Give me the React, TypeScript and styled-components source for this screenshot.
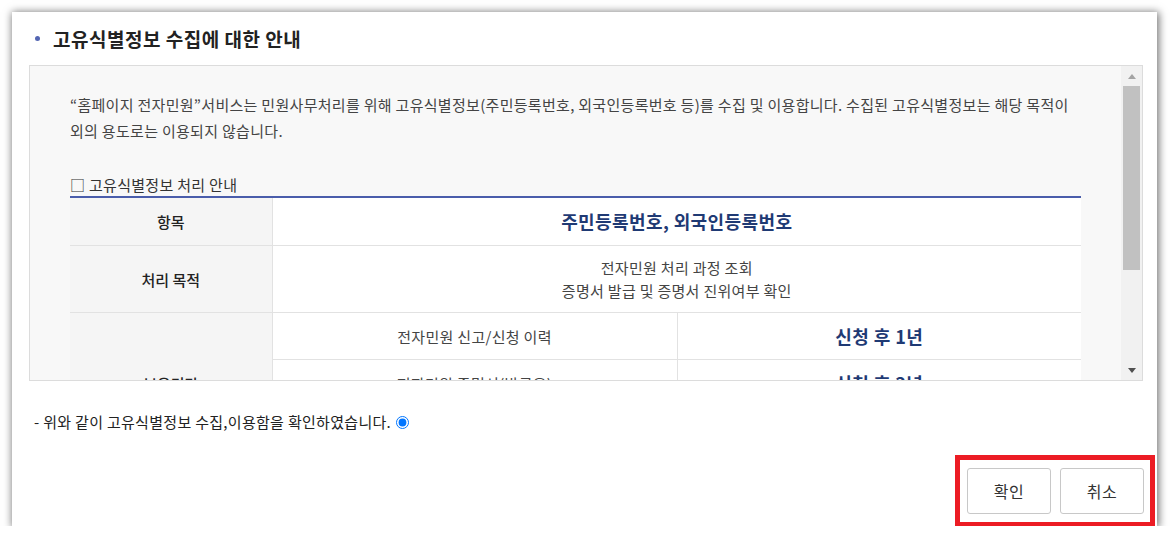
import React from 'react'
import styled, { createGlobalStyle } from 'styled-components'

const GlobalStyle = createGlobalStyle`
	html, body {
		margin: 0;
		padding: 0;
		background: #ffffff;
	}
	body {
		font-family: "Noto Sans CJK KR", "Noto Sans", sans-serif;
		color: #333;
	}
`

interface RetentionRow {
	id: string
	record: string
	period: string
}

const retention: RetentionRow[] = [
	{ id: 'r1', record: '전자민원 신고/신청 이력', period: '신청 후 1년' },
	{ id: 'r2', record: '전자민원 증명서(발급용)', period: '신청 후 3년' },
	{ id: 'r3', record: '전자민원 열람 이력', period: '신청 후 1년' },
]

const App: React.FC = () => {
	return (
		<>
			<GlobalStyle />
			<Dialog>
				<Header>
					<Bullet />
					<Title>고유식별정보 수집에 대한 안내</Title>
				</Header>

				<ScrollBox>
					<ScrollContent>
						<Intro>
							“홈페이지 전자민원”서비스는 민원사무처리를 위해 고유식별정보(주민등록번호, 외국인등록번호 등)를 수집 및 이용합니다. 수집된 고유식별정보는 해당 목적이
							<br />
							외의 용도로는 이용되지 않습니다.
						</Intro>

						<SubTitle>□ 고유식별정보 처리 안내</SubTitle>

						<InfoTable>
							<colgroup>
								<col style={{ width: 202 }} />
								<col style={{ width: 405 }} />
								<col />
							</colgroup>
							<tbody>
								<tr>
									<HeadCell $height={48}>항목</HeadCell>
									<ValueCell colSpan={2} $strong>
										주민등록번호, 외국인등록번호
									</ValueCell>
								</tr>
								<tr>
									<HeadCell $height={67}>처리 목적</HeadCell>
									<ValueCell colSpan={2}>
										전자민원 처리 과정 조회
										<br />
										증명서 발급 및 증명서 진위여부 확인
									</ValueCell>
								</tr>
								{retention.map((row, i) => (
									<tr key={row.id}>
										{i === 0 && <HeadCell rowSpan={retention.length}>보유기간</HeadCell>}
										<ValueCell $height={47}>{row.record}</ValueCell>
										<ValueCell $height={47} $strong $divider>
											{row.period}
										</ValueCell>
									</tr>
								))}
							</tbody>
						</InfoTable>
					</ScrollContent>

					<Scrollbar>
						<ArrowButton>
							<Arrow $dir="up" />
						</ArrowButton>
						<Track>
							<Thumb />
						</Track>
						<ArrowButton>
							<Arrow $dir="down" />
						</ArrowButton>
					</Scrollbar>
				</ScrollBox>

				<Agree>
					- 위와 같이 고유식별정보 수집,이용함을 확인하였습니다.
					<Radio type="radio" name="agree" defaultChecked />
				</Agree>

				<Footer>
					<ButtonGroup>
						<Button>확인</Button>
						<Button>취소</Button>
					</ButtonGroup>
				</Footer>
			</Dialog>
		</>
	)
}

export default App

const Dialog = styled.div`
	margin: 12px 0 0 12px;
	width: 1145px;
	height: 514px;
	background: #fff;
	box-shadow: 1px 1px 8px 1px rgba(0, 0, 0, 0.55);
	display: flex;
	flex-direction: column;
	box-sizing: border-box;
`

const Header = styled.div`
	height: 53px;
	display: flex;
	align-items: center;
	gap: 13px;
	padding-left: 23px;
	box-sizing: border-box;
`

const Bullet = styled.span`
	width: 5px;
	height: 5px;
	border-radius: 50%;
	background: #5466b3;
`

const Title = styled.h1`
	margin: 0;
	font-size: 19px;
	font-weight: 700;
	letter-spacing: 0.5px;
	color: #222;
	line-height: 24px;
`

const ScrollBox = styled.div`
	margin: 0 14px 0 17px;
	height: 316px;
	border: 1px solid #dcdcdc;
	background: #f8f8f8;
	display: flex;
	box-sizing: border-box;
`

const ScrollContent = styled.div`
	flex: 1;
	overflow: hidden;
	padding: 26px 40px 0 40px;
`

const Intro = styled.p`
	margin: 0;
	font-size: 15px;
	letter-spacing: 0.3px;
	line-height: 26px;
	color: #444;
	white-space: nowrap;
`

const SubTitle = styled.h2`
	margin: 30px 0 0;
	font-size: 15px;
	font-weight: 400;
	letter-spacing: 0.3px;
	line-height: 22px;
	color: #333;
`

const InfoTable = styled.table`
	width: 100%;
	border-collapse: collapse;
	border-top: 2px solid #4a5dab;
	table-layout: fixed;
`

const HeadCell = styled.th<{ $height?: number }>`
	height: ${(p) => (p.$height ? `${p.$height - 1}px` : 'auto')};
	background: #f5f5f5;
	border-bottom: 1px solid #e2e2e2;
	border-right: 1px solid #e2e2e2;
	font-size: 15px;
	font-weight: 500;
	color: #222;
	text-align: center;
	padding: 0;
`

const ValueCell = styled.td<{ $height?: number; $strong?: boolean; $divider?: boolean }>`
	height: ${(p) => (p.$height ? `${p.$height - 1}px` : 'auto')};
	background: #fff;
	border-bottom: 1px solid #e2e2e2;
	border-left: ${(p) => (p.$divider ? '1px solid #e2e2e2' : 'none')};
	text-align: center;
	padding: 0;
	font-size: ${(p) => (p.$strong ? '18px' : '15px')};
	font-weight: ${(p) => (p.$strong ? 700 : 400)};
	letter-spacing: ${(p) => (p.$strong ? '0.4px' : '0.3px')};
	color: ${(p) => (p.$strong ? '#1f3a74' : '#444')};
	line-height: 23px;
`

const Scrollbar = styled.div`
	width: 21px;
	background: #f1f1f1;
	display: flex;
	flex-direction: column;
`

const ArrowButton = styled.div`
	height: 20px;
	display: flex;
	align-items: center;
	justify-content: center;
`

const Arrow = styled.span<{ $dir: 'up' | 'down' }>`
	width: 0;
	height: 0;
	border-left: 4.5px solid transparent;
	border-right: 4.5px solid transparent;
	${(p) =>
		p.$dir === 'up'
			? 'border-bottom: 5px solid #a3a3a3;'
			: 'border-top: 5px solid #505050;'}
`

const Track = styled.div`
	flex: 1;
	padding: 0 2px;
`

const Thumb = styled.div`
	height: 184px;
	background: #c1c1c1;
`

const Agree = styled.div`
	margin-top: 31px;
	padding-left: 22px;
	display: flex;
	align-items: center;
	gap: 5px;
	font-size: 15px;
	letter-spacing: 0.3px;
	line-height: 20px;
	color: #222;
`

const Radio = styled.input`
	margin: 0;
	width: 13px;
	height: 13px;
	accent-color: #0075ff;
`

const Footer = styled.div`
	margin-top: auto;
	margin-bottom: -1px;
	margin-right: 2px;
	display: flex;
	justify-content: flex-end;
`

const ButtonGroup = styled.div`
	display: flex;
	gap: 9px;
	padding: 8px 6px 8px 7px;
	border: 5px solid #ec1c24;
`

const Button = styled.button`
	width: 84px;
	height: 46px;
	background: #fff;
	border: 1px solid #c8c8c8;
	border-radius: 3px;
	font-family: "Noto Sans CJK KR", "Noto Sans", sans-serif;
	font-size: 16px;
	letter-spacing: 0.5px;
	color: #333;
	cursor: pointer;
`
